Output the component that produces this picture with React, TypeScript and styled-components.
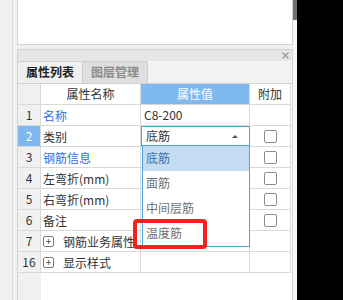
import React from 'react';
import styled, { createGlobalStyle } from 'styled-components';

const GlobalStyle = createGlobalStyle`
  html, body { margin: 0; padding: 0; background: #000; }
  body {
    font-family: "Noto Sans CJK SC", "Noto Sans", sans-serif;
    font-size: 12px;
    color: #333;
  }
  * { box-sizing: border-box; }
`;

const Page = styled.div`
  display: flex;
  width: 297px;
  height: 300px;
  background: #f0f0f0;
  overflow: hidden;
`;

const Gutter = styled.div`
  flex: none;
  width: 13px;
  border-right: 1px solid #d9d9d9;
`;

const Panels = styled.div`
  flex: none;
  width: 280px;
  padding-left: 4px;
  display: flex;
  flex-direction: column;
  gap: 4px;
`;

const ScrollTrack = styled.div`
  flex: none;
  width: 4px;
  background: #f7f7f7;
`;

const Thumb = styled.div`
  height: 20px;
  background: #6d7279;
`;

const TopPanel = styled.div`
  flex: none;
  height: 45px;
  background: #fff;
  border: 1px solid #d3d3d3;
  border-top: none;
`;

const PropPanel = styled.div`
  flex: 1;
  display: flex;
  flex-direction: column;
  background: #fff;
  border: 1px solid #d3d3d3;
  border-bottom: none;
  min-height: 0;
`;

const TitleBar = styled.div`
  flex: none;
  height: 11px;
  background: #e6e6e6;
  display: flex;
  justify-content: flex-end;
  align-items: center;
  padding-right: 3px;
`;

const TabBar = styled.div`
  flex: none;
  display: flex;
  height: 23px;
  background: #f2f2f2;
  border-bottom: 1px solid #d0d0d0;
`;

const Tab = styled.div<{ $active?: boolean }>`
  width: ${(p) => (p.$active ? 65 : 65)}px;
  height: 22px;
  border-top: 1px solid #cfcfcf;
  border-right: 1px solid #cfcfcf;
  background: ${(p) => (p.$active ? '#f0f0f0' : '#dedede')};
  color: ${(p) => (p.$active ? '#222' : '#8a8a8a')};
  font-weight: bold;
  font-size: 12px;
  line-height: 20px;
  text-align: center;
`;

const Table = styled.div`
  flex: 1;
  display: flex;
  flex-direction: column;
  min-height: 0;
`;

const Row = styled.div`
  flex: none;
  display: grid;
  grid-template-columns: 23px 100px 109px 41px;
  height: 21px;
`;

const FillerRow = styled.div`
  flex: 1;
  display: grid;
  grid-template-columns: 23px 1fr;
`;

const Cell = styled.div`
  position: relative;
  height: 21px;
  line-height: 20px;
  border-right: 1px solid #d9d9d9;
  border-bottom: 1px solid #d9d9d9;
  white-space: nowrap;
`;

const NumCell = styled(Cell)<{ $selected?: boolean }>`
  text-align: center;
  background: ${(p) => (p.$selected ? '#7eb8ef' : '#f0f0f0')};
  color: ${(p) => (p.$selected ? '#fff' : '#333')};
`;

const HeadCell = styled(Cell)<{ $accent?: boolean }>`
  text-align: center;
  background: ${(p) => (p.$accent ? '#80b9f0' : '#fff')};
  color: ${(p) => (p.$accent ? '#fff' : '#333')};
`;

const NameCell = styled(Cell)<{ $link?: boolean }>`
  padding-left: 2px;
  color: ${(p) => (p.$link ? '#2f6ee5' : '#333')};
  display: flex;
  align-items: center;
  line-height: normal;
`;

const ValueCell = styled(Cell)`
  padding-left: 3px;
`;

const CheckCell = styled(Cell)`
  display: flex;
  align-items: center;
  justify-content: center;
`;

const Checkbox = styled.span`
  width: 13px;
  height: 13px;
  border: 1px solid #8c8c8c;
  border-radius: 2px;
  background: #fff;
  margin-left: 1px;
`;

const ExpandBox = styled.span`
  display: inline-flex;
  align-items: center;
  justify-content: center;
  width: 11px;
  height: 11px;
  border: 1px solid #7a7a7a;
  border-radius: 2px;
  margin-right: 9px;
  color: #444;
  font-size: 10px;
  line-height: 1;
`;

const GrayFill = styled.div`
  background: #f0f0f0;
`;

const Select = styled.div`
  position: absolute;
  top: 0;
  left: 0;
  right: -1px;
  height: 20px;
  border: 1px solid #4ea5dc;
  background: #fff;
  padding-left: 4px;
  line-height: 18px;
  display: flex;
  align-items: center;
  justify-content: space-between;
  padding-right: 11px;
  z-index: 2;
`;

const Caret = styled.span`
  width: 0;
  height: 0;
  border-left: 3px solid transparent;
  border-right: 3px solid transparent;
  border-bottom: 3px solid #555;
`;

const List = styled.div`
  position: absolute;
  top: 19px;
  left: 1px;
  right: -1px;
  border: 1px solid #4ea5dc;
  background: #fff;
  z-index: 3;
`;

const Option = styled.div<{ $active?: boolean }>`
  position: relative;
  height: 25px;
  line-height: 24px;
  padding-left: 3px;
  background: ${(p) => (p.$active ? '#c4dcf2' : '#fff')};
  color: ${(p) => (p.$active ? '#3a6fa8' : '#707070')};
`;

const Highlight = styled.div`
  position: absolute;
  left: -10px;
  top: -2px;
  width: 74px;
  height: 30px;
  border: 4px solid #f5221b;
  border-radius: 4px;
  pointer-events: none;
`;

const CloseIcon = () => (
  <svg width="7" height="7" viewBox="0 0 7 7">
    <path d="M0.5 0.5 L6.5 6.5 M6.5 0.5 L0.5 6.5" stroke="#9a9a9a" strokeWidth="1.2" />
  </svg>
);

type RowData = {
  num: string;
  name: string;
  link?: boolean;
  value?: string;
  check?: boolean;
  group?: boolean;
};

const rows: RowData[] = [
  { num: '1', name: '名称', link: true, value: 'C8-200' },
  { num: '2', name: '类别', check: true },
  { num: '3', name: '钢筋信息', link: true, check: true },
  { num: '4', name: '左弯折(mm)', check: true },
  { num: '5', name: '右弯折(mm)', check: true },
  { num: '6', name: '备注', check: true },
  { num: '7', name: '钢筋业务属性', group: true },
  { num: '16', name: '显示样式', group: true },
];

const options = ['底筋', '面筋', '中间层筋', '温度筋'];

export default function App() {
  return (
    <>
      <GlobalStyle />
      <Page>
        <Gutter />
        <Panels>
          <TopPanel />
          <PropPanel>
            <TitleBar>
              <CloseIcon />
            </TitleBar>
            <TabBar>
              <Tab $active>属性列表</Tab>
              <Tab>图层管理</Tab>
            </TabBar>
            <Table>
              <Row>
                <NumCell />
                <HeadCell>属性名称</HeadCell>
                <HeadCell $accent>属性值</HeadCell>
                <HeadCell>附加</HeadCell>
              </Row>
              {rows.map((r) => (
                <Row key={r.num}>
                  <NumCell $selected={r.num === '2'}>{r.num}</NumCell>
                  <NameCell $link={r.link}>
                    {r.group && <ExpandBox>+</ExpandBox>}
                    {r.name}
                  </NameCell>
                  <ValueCell>
                    {r.value}
                    {r.num === '2' && (
                      <>
                        <Select>
                          <span>底筋</span>
                          <Caret />
                        </Select>
                        <List>
                          {options.map((o, i) => (
                            <Option key={o} $active={i === 0}>
                              {o}
                              {i === 3 && <Highlight />}
                            </Option>
                          ))}
                        </List>
                      </>
                    )}
                  </ValueCell>
                  <CheckCell>{r.check && <Checkbox />}</CheckCell>
                </Row>
              ))}
              <FillerRow>
                <GrayFill />
                <div />
              </FillerRow>
            </Table>
          </PropPanel>
        </Panels>
        <ScrollTrack>
          <Thumb />
        </ScrollTrack>
      </Page>
    </>
  );
}
